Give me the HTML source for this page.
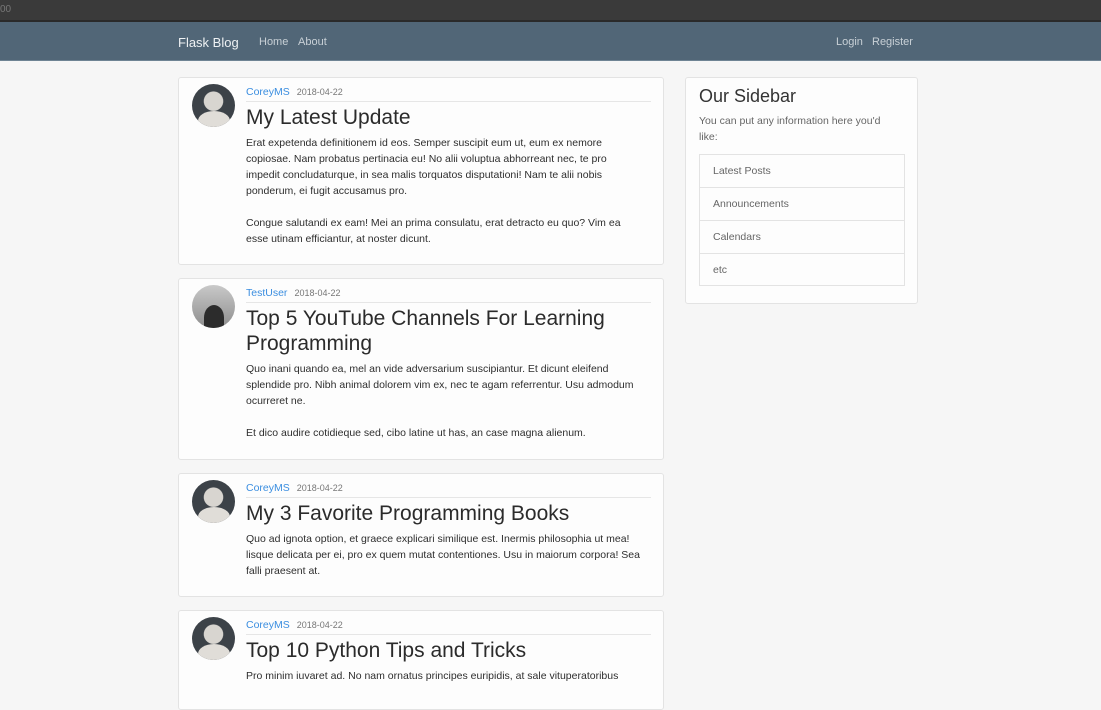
<!DOCTYPE html><html><head><style>
*{margin:0;padding:0;box-sizing:border-box}
body{width:1101px;height:688px;overflow:hidden;background:#f6f6f6;font-family:"Liberation Sans",sans-serif;color:#333;position:relative}
.top{position:absolute;left:0;top:0;width:1101px;height:22px;background:#3a3a3a;border-bottom:2px solid #2a2a2a}
.top span{position:absolute;left:0;top:4px;font-size:10px;color:#777}
.nav{position:absolute;left:0;top:22px;width:1101px;height:39px;background:#516677;border-bottom:1px solid #6f8494}
.nav span{position:absolute;top:14px;font-size:11px;color:#c8d0d6}
.nav .brand{font-size:13px;color:#eef1f3;top:12px}
.card{position:absolute;left:178px;width:486px;background:#fdfdfd;border:1px solid #e3e3e3;border-radius:3px}
.av{position:absolute;left:13px;top:6px;width:43px;height:43px;border-radius:50%;background:radial-gradient(circle at 50% 40%,#d8d5d0 0 28%,#3c4248 30%);overflow:hidden}
.av:after{content:"";position:absolute;left:6px;top:27px;width:32px;height:20px;border-radius:50% 50% 0 0;background:#e0ddd8}
.av2{background:linear-gradient(#c9c9c9,#8d8d8d)}
.av2:after{left:12px;top:20px;width:20px;height:25px;background:#2c2c2c}
.meta{position:absolute;left:67px;top:8px;width:405px;border-bottom:1px solid #e6e6e6;height:16px;font-size:10.5px}
.meta a{color:#3b8ee0;margin-right:7px}
.meta small{font-size:9px;color:#777}
.c{position:absolute;left:67px;top:27px;width:395px}
h2{font-weight:normal;font-size:21px;line-height:25px;color:#2b2b2b;margin-bottom:5px}
p{font-size:10.5px;line-height:16px;color:#2e2e2e;margin-bottom:16px}
.side{position:absolute;left:685px;top:77px;width:233px;height:227px;background:#fdfdfd;border:1px solid #e3e3e3;border-radius:3px}
.side h3{position:absolute;left:13px;top:8px;font-weight:normal;font-size:18px;color:#333}
.side .d{position:absolute;left:13px;top:35px;width:192px;font-size:10.5px;line-height:16px;color:#666}
.list{position:absolute;left:13px;top:76px;width:206px;border:1px solid #e3e3e3}
.list div{height:33px;line-height:32px;padding-left:13px;font-size:10.5px;color:#666;border-bottom:1px solid #e3e3e3}
.list div:last-child{border-bottom:0;height:31px}
</style></head><body>
<div class="top"><span>00</span></div>
<div class="nav"><span class="brand" style="left:178px;top:13px">Flask Blog</span><span style="left:259px;top:14px">Home</span><span style="left:298px;top:14px">About</span><span style="left:836px;top:14px">Login</span><span style="left:872px;top:14px">Register</span></div>

<div class="card" style="top:77px;height:188px"><div class="av"></div><div class="meta"><a>CoreyMS</a><small>2018-04-22</small></div><div class="c"><h2>My Latest Update</h2><p>Erat expetenda definitionem id eos. Semper suscipit eum ut, eum ex nemore copiosae. Nam probatus pertinacia eu! No alii voluptua abhorreant nec, te pro impedit concludaturque, in sea malis torquatos disputationi! Nam te alii nobis ponderum, ei fugit accusamus pro.</p><p>Congue salutandi ex eam! Mei an prima consulatu, erat detracto eu quo? Vim ea esse utinam efficiantur, at noster dicunt.</p></div></div>

<div class="card" style="top:278px;height:182px"><div class="av av2"></div><div class="meta"><a>TestUser</a><small>2018-04-22</small></div><div class="c"><h2>Top 5 YouTube Channels For Learning Programming</h2><p>Quo inani quando ea, mel an vide adversarium suscipiantur. Et dicunt eleifend splendide pro. Nibh animal dolorem vim ex, nec te agam referrentur. Usu admodum ocurreret ne.</p><p>Et dico audire cotidieque sed, cibo latine ut has, an case magna alienum.</p></div></div>

<div class="card" style="top:473px;height:124px"><div class="av"></div><div class="meta"><a>CoreyMS</a><small>2018-04-22</small></div><div class="c"><h2>My 3 Favorite Programming Books</h2><p>Quo ad ignota option, et graece explicari similique est. Inermis philosophia ut mea! lisque delicata per ei, pro ex quem mutat contentiones. Usu in maiorum corpora! Sea falli praesent at.</p></div></div>

<div class="card" style="top:610px;height:100px"><div class="av"></div><div class="meta"><a>CoreyMS</a><small>2018-04-22</small></div><div class="c"><h2>Top 10 Python Tips and Tricks</h2><p>Pro minim iuvaret ad. No nam ornatus principes euripidis, at sale vituperatoribus</p></div></div>

<div class="side"><h3>Our Sidebar</h3><div class="d">You can put any information here you'd like:</div><div class="list"><div>Latest Posts</div><div>Announcements</div><div>Calendars</div><div>etc</div></div></div>
</body></html>
